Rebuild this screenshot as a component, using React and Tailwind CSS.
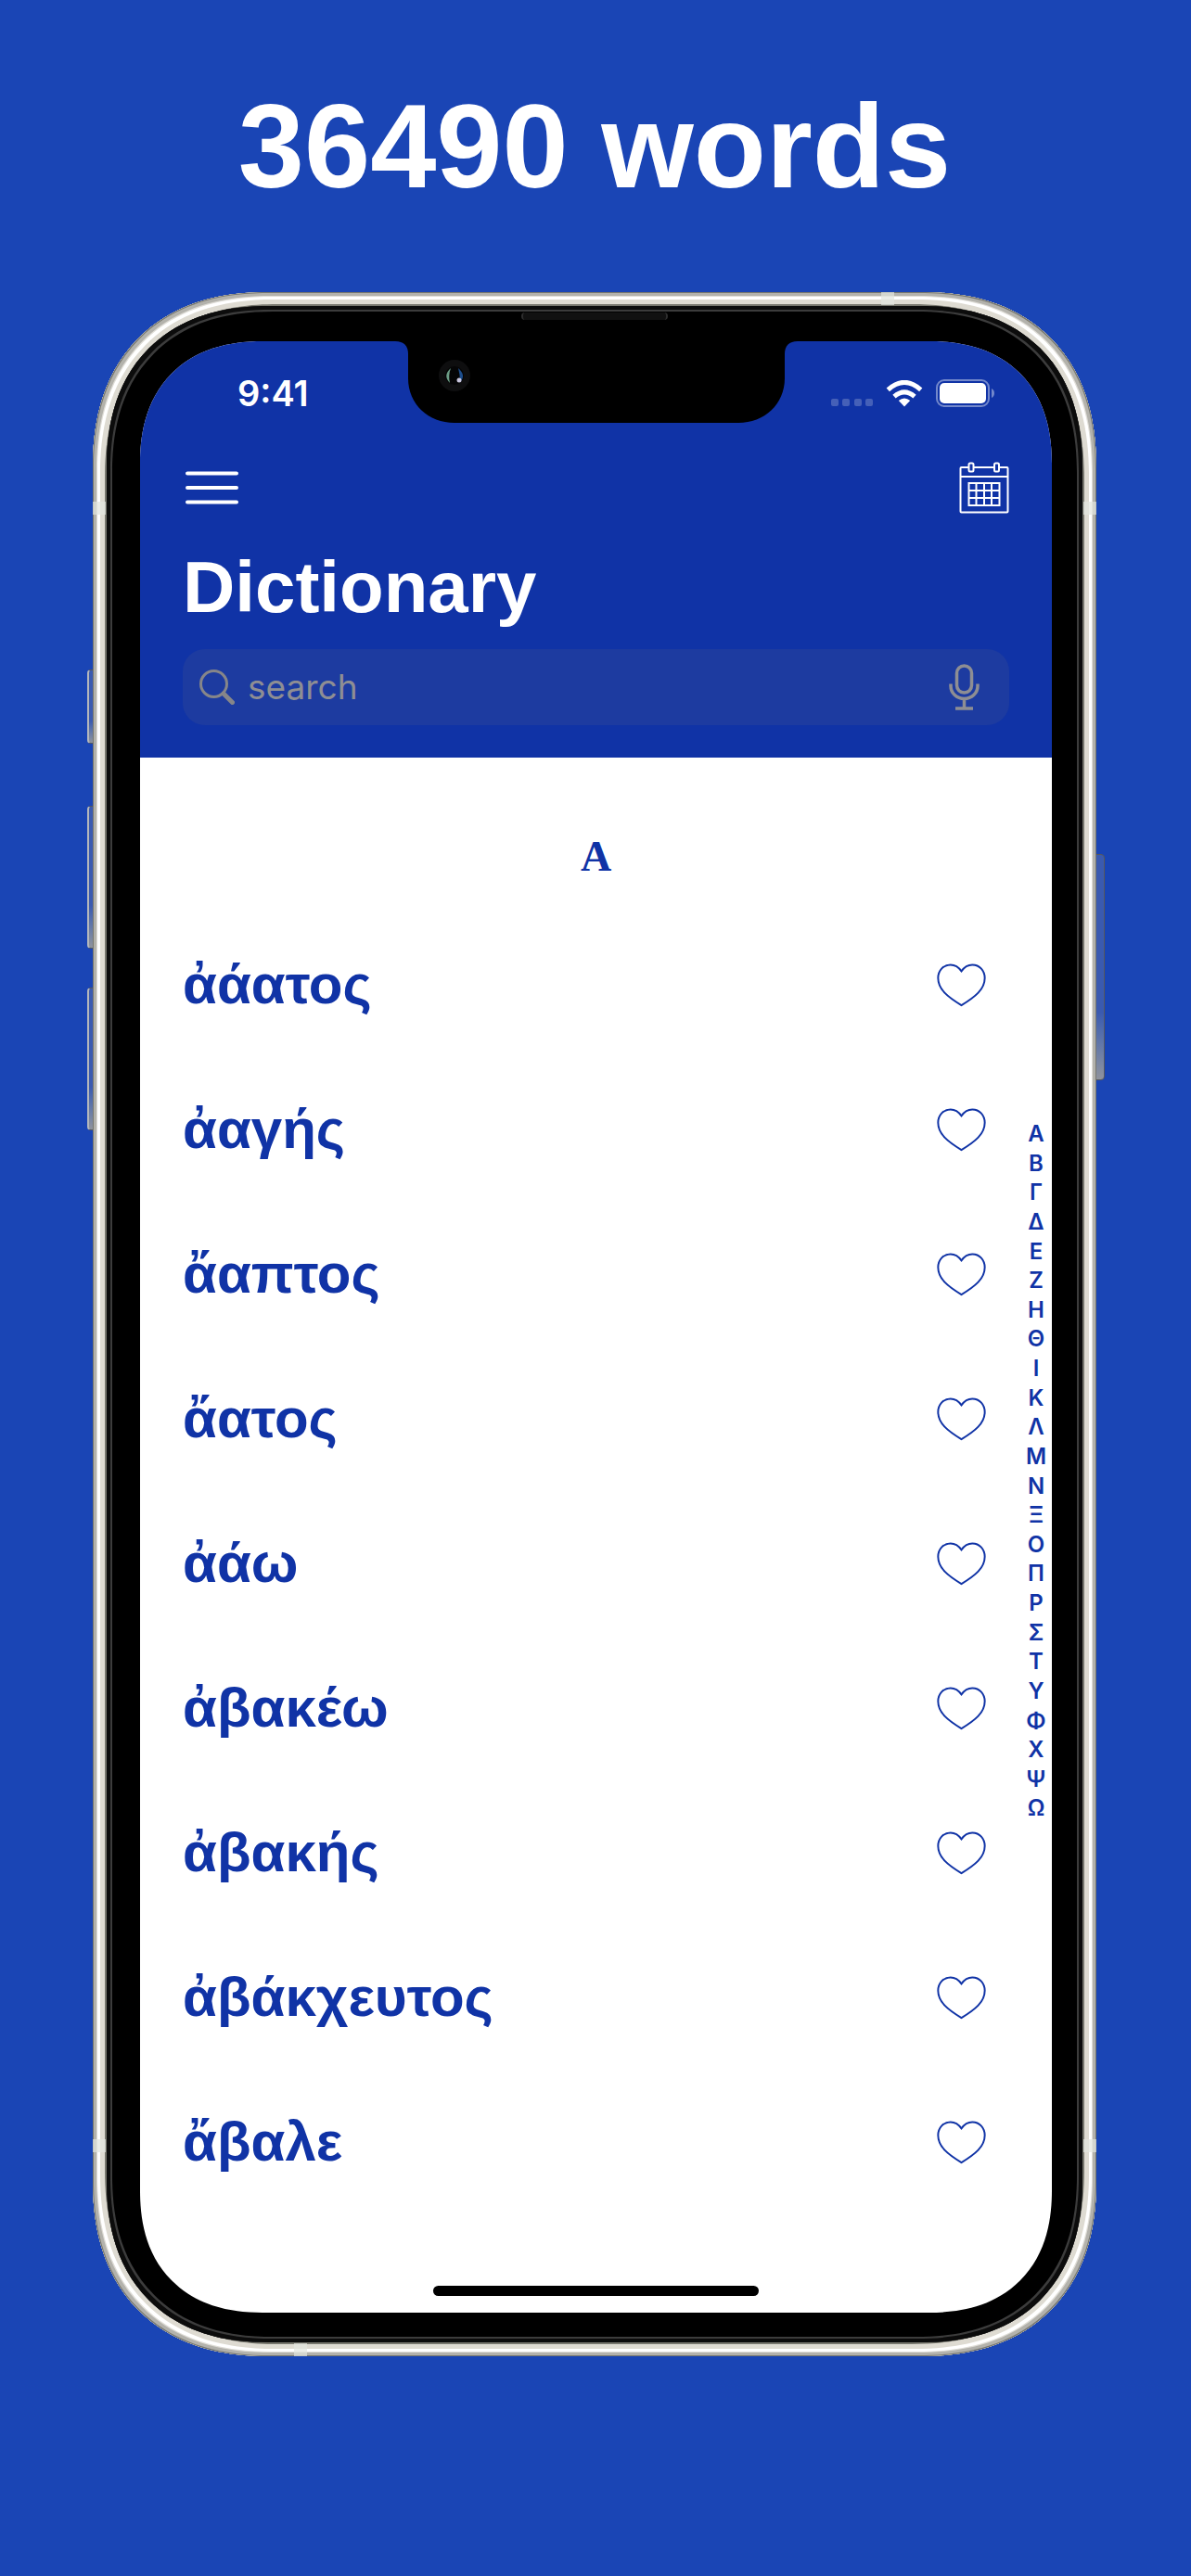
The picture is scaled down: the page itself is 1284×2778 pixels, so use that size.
import { useState } from "react";

const words = [
    "ἀάατος",
    "ἀαγής",
    "ἄαπτος",
    "ἄατος",
    "ἀάω",
    "ἀβακέω",
    "ἀβακής",
    "ἀβάκχευτος",
    "ἄβαλε",
];

const letters = [..."ΑΒΓΔΕΖΗΘΙΚΛΜΝΞΟΠΡΣΤΥΦΧΨΩ"];

function MenuIcon() {
    return (
        <svg width="57" height="36" viewBox="0 0 57 36" stroke="white" strokeWidth="4" strokeLinecap="round">
            <path d="M2 2.500h53M2 18h53M2 33.500h53" />
        </svg>
    );
}

function CalendarIcon() {
    return (
        <svg width="54" height="56" viewBox="0 0 54 56" fill="none" stroke="white" strokeWidth="2">
            <path d="M10 6H2.500Q1.500 6 1.500 7V53.500Q1.500 54.500 2.500 54.500H51.500Q52.500 54.500 52.500 53.500V7Q52.500 6 51.500 6H44M38 6H16M1.500 16H52.500" />
            <rect x="10.500" y="1.500" width="5" height="9" rx="1.500" />
            <rect x="38" y="1.500" width="5" height="9" rx="1.500" />
            <path d="M10.500 23h33v24h-33zM18.500 23v24M27 23v24M35 23v24M10.500 31h33M10.500 39h33" />
        </svg>
    );
}

function SearchIcon() {
    return (
        <svg width="38" height="38" viewBox="0 0 38 38" fill="none" stroke="#868689" strokeLinecap="round">
            <circle cx="15.500" cy="15.500" r="14" strokeWidth="3" />
            <path d="M26 26l9.500 9.500" strokeWidth="5" />
        </svg>
    );
}

function MicIcon() {
    return (
        <svg width="33" height="50" viewBox="0 0 33 50" fill="none" stroke="#8e8e93" strokeWidth="3.500">
            <rect x="8.500" y="2" width="16" height="29" rx="8" />
            <path d="M2 21.500V24a14.500 13.500 0 0 0 29 0V21.500M16.500 38v9M7 48h19" />
        </svg>
    );
}

function HeartIcon({ filled }) {
    return (
        <svg width="53" height="47" viewBox="0 0 54 48" fill={filled ? "#1033a6" : "none"} stroke="#1033a6" strokeWidth="2">
            <path d="M27 8.500C23.500 3.500 19.500 1.500 15 1.500C7 1.500 1.300 8 1.300 16C1.300 28.500 12 37 27 46C42 37 52.700 28.500 52.700 16C52.700 8 47 1.500 39 1.500C34.500 1.500 30.500 3.500 27 8.500Z" />
        </svg>
    );
}

function StatusIcons() {
    return (
        <div className="flex items-center">
            <svg width="46" height="28" viewBox="0 0 46 28" fill="#4560b8">
                <rect x="0" y="20" width="8" height="8" rx="2" />
                <rect x="12" y="20" width="8" height="8" rx="2" />
                <rect x="25" y="20" width="8" height="8" rx="2" />
                <rect x="37" y="20" width="8" height="8" rx="2" />
            </svg>
            <svg className="ml-[13px]" width="40" height="29" viewBox="0 0 40 29">
                <path d="M2.300 10.300Q20 -5.500 37.700 10.300" fill="none" stroke="white" strokeWidth="5" />
                <path d="M9 17.600Q20 8 31 17.600" fill="none" stroke="white" strokeWidth="5" />
                <path d="M13.800 22Q20 17 26.200 22L20 28.500Z" fill="white" />
            </svg>
            <svg className="ml-[14px]" width="64" height="30" viewBox="0 0 64 30">
                <rect x="1" y="1" width="56" height="28" rx="8" fill="none" stroke="#7388cb" strokeWidth="2" />
                <rect x="4" y="4" width="50" height="22" rx="5" fill="white" />
                <path d="M60 10q3 1.500 3 5t-3 5z" fill="#7388cb" />
            </svg>
        </div>
    );
}

function Notch() {
    return (
        <svg className="absolute top-0 left-1/2 -translate-x-1/2" width="434" height="88" viewBox="0 0 434 88">
            <path d="M0 0H434Q420 0 420 14V40C420 68 398 88 370 88H64C36 88 14 68 14 40V14Q14 0 0 0Z" fill="black" />
            <circle cx="64" cy="37" r="17" fill="#0e0e0f" />
            <circle cx="64" cy="37" r="10" fill="#050506" />
            <path d="M60 29Q51 37 59 45Q57 37 60 29Z" fill="#6c9d86" />
            <path d="M68 29Q77 37 70 44Q70 36 68 29Z" fill="#1c4d8c" />
            <circle cx="69" cy="42" r="2.500" fill="#c9c6dd" />
        </svg>
    );
}

function SideButton({ className }) {
    return <div className={`absolute border border-[#55585e] bg-linear-to-b from-[#3a5ab0] from-70% to-[#8f939c] ${className}`} />;
}

function AntennaBand({ className }) {
    return <div className={`absolute h-[14px] w-[14px] bg-[#e3e5de]/70 ${className}`} />;
}

function Phone({ children }) {
    return (
        <div className="relative w-full">
            <SideButton className="top-[407px] -left-[6px] h-[80px] w-[12px] rounded-l-[4px] border-l-2 border-l-[#b4b7bb]" />
            <SideButton className="top-[554px] -left-[6px] h-[154px] w-[12px] rounded-l-[4px] border-l-2 border-l-[#b4b7bb]" />
            <SideButton className="top-[750px] -left-[6px] h-[154px] w-[12px] rounded-l-[4px] border-l-2 border-l-[#b4b7bb]" />
            <SideButton className="top-[606px] -right-[9px] h-[244px] w-[14px] rounded-r-[4px]" />
            <div className="relative rounded-[190px] bg-[#e6e2d8] p-[15px] shadow-[inset_0_0_0_1px_#77776f,inset_0_0_0_4px_#b3b2ac,inset_0_0_0_5px_#dedcd6,inset_0_0_0_8px_#ffffff,inset_0_0_0_13px_#dedbd2,inset_0_0_0_15px_#77776e] [corner-shape:superellipse(1.2)]">
                <AntennaBand className="top-0 left-[850px]" />
                <AntennaBand className="bottom-0 left-[217px]" />
                <AntennaBand className="top-[226px] left-0" />
                <AntennaBand className="top-[226px] right-0" />
                <AntennaBand className="bottom-[220px] left-0" />
                <AntennaBand className="right-0 bottom-[220px]" />
                <div className="relative rounded-[175px] bg-black pt-[38px] pr-[33px] pb-[32px] pl-[36px] shadow-[inset_0_0_0_4px_#0c0c0c,inset_0_0_0_6px_#3c3c3c] [corner-shape:superellipse(1.2)]">
                    <div className="absolute top-[7px] left-1/2 h-[8px] w-[158px] -translate-x-1/2 rounded-full border-x-2 border-[#2e2e2e] bg-[#111111]" />
                    {children}
                </div>
            </div>
        </div>
    );
}

export default function App() {
    const [query, setQuery] = useState("");
    const [favorites, setFavorites] = useState([]);

    const toggleFavorite = (word) => {
        setFavorites((prev) => (prev.includes(word) ? prev.filter((w) => w !== word) : [...prev, word]));
    };

    const filteredWords = words.filter((word) => word.includes(query));

    return (
        <div className="min-h-screen bg-[#1a45b5] pr-[102px] pb-20 pl-[100px] font-['Inter',sans-serif]">
            <h1 className="pt-[84px] text-center font-['Liberation_Sans',sans-serif] text-[128px] leading-[148px] font-bold text-white">
                36490 words
            </h1>
            <div className="mt-[83px]">
                <Phone>
                    <div className="relative overflow-hidden rounded-[132px] bg-white [corner-shape:superellipse(1.2)]">
                        <header className="bg-[#1033a6] px-[46px] pb-[35px] text-white">
                            <div className="flex h-[112px] items-center justify-between pr-[15px] pl-[59px]">
                                <span className="text-[38px] leading-[48px] font-semibold">9:41</span>
                                <StatusIcons />
                            </div>
                            <div className="mt-[18px] flex h-[56px] items-center justify-between">
                                <button type="button" aria-label="Menu" className="pl-[3px]">
                                    <MenuIcon />
                                </button>
                                <button type="button" aria-label="Calendar">
                                    <CalendarIcon />
                                </button>
                            </div>
                            <h2 className="mt-[34px] font-['Liberation_Sans',sans-serif] text-[78px] leading-[90px] font-bold">
                                Dictionary
                            </h2>
                            <div className="mt-[22px] flex h-[82px] items-center rounded-[24px] bg-[#1d3ba0] pr-8 pl-[18px]">
                                <SearchIcon />
                                <input
                                    type="text"
                                    aria-label="search"
                                    placeholder="search"
                                    value={query}
                                    onChange={(e) => setQuery(e.target.value)}
                                    className="ml-[14px] min-w-0 flex-1 bg-transparent text-[37px] text-[#8e8e93] outline-none placeholder:text-[#8e8e93]"
                                />
                                <button type="button" aria-label="Dictate">
                                    <MicIcon />
                                </button>
                            </div>
                        </header>
                        <h3 className="pt-[78px] pb-[31px] text-center font-['Liberation_Serif',serif] text-[46px] leading-[58px] font-bold text-[#1033a6]">
                            Α
                        </h3>
                        <div className="flex items-start">
                            <ul className="flex-1 pr-[37px] pl-[46px] font-['Liberation_Sans',sans-serif]">
                                {filteredWords.map((word) => (
                                    <li key={word} className="flex h-[156px] items-center justify-between">
                                        <span className="text-[60px] leading-[70px] font-bold text-[#1033a6]">{word}</span>
                                        <button type="button" aria-label={`Favorite ${word}`} onClick={() => toggleFavorite(word)}>
                                            <HeartIcon filled={favorites.includes(word)} />
                                        </button>
                                    </li>
                                ))}
                            </ul>
                            <nav className="mt-[223px] flex h-[759px] w-[34px] flex-col text-center text-[24px] leading-[31px] font-semibold text-[#1033a6]">
                                {letters.map((letter) => (
                                    <a key={letter} href={`#${letter}`} className="flex-1">
                                        {letter}
                                    </a>
                                ))}
                            </nav>
                        </div>
                        <div className="mx-auto mt-[77px] mb-[18px] h-[11px] w-[351px] rounded-full bg-black" />
                        <Notch />
                    </div>
                </Phone>
            </div>
        </div>
    );
}
